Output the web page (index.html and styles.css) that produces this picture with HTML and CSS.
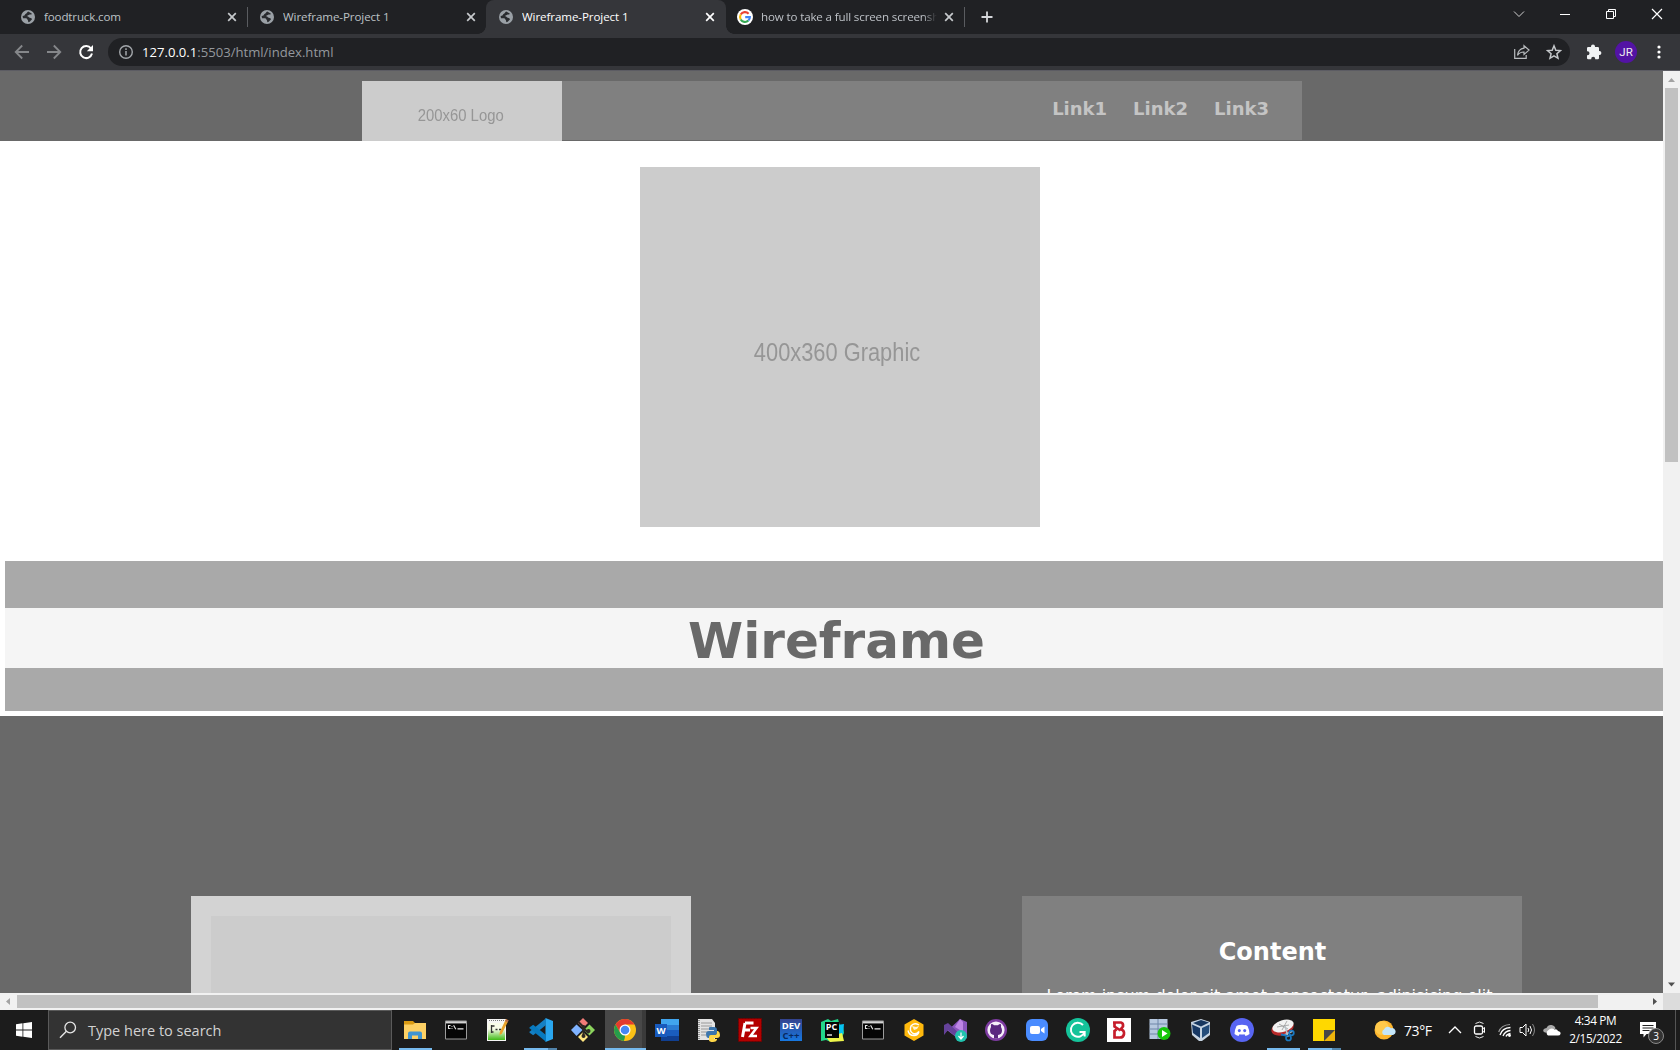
FILE: index.html
```html
<!DOCTYPE html>
<html lang="en">
<head>
<meta charset="utf-8">
<title>Wireframe-Project 1</title>
<link rel="stylesheet" href="styles.css">
</head>
<body>
<svg class="defs" width="0" height="0">
  <symbol id="globe" viewBox="0 0 14 14"><circle cx="7" cy="7" r="7" fill="#9aa0a6"/><path d="M7.2 1.6c-1.300.6-1 1.700-2.300 2.100C3.600 4.200 4 5.600 2.700 5.700L1.600 6.100 2 8.200l3.100.1c1 .1.800 1 1.500 1.500.7.400.2 1.500.9 2.500 2-.3 2.100-1.900 3.300-2.500.3-1.400-.700-1.900-2-2-1-.1-.8-1.200-2-1.300-.9-.2-.5-1.100.4-1.200 1.200 0 1-.8 2.100-.7 1 .1 1.500-.4 1.400-1.200z" fill="#292b2f"/></symbol>
  <symbol id="close" viewBox="0 0 10 10"><path d="M1.200 1.200l7.600 7.600M8.800 1.200L1.200 8.800" stroke="currentColor" stroke-width="1.700" fill="none"/></symbol>
  <symbol id="cmd" viewBox="0 0 24 24"><rect x="1" y="2.500" width="22" height="19" rx="1" fill="#9b9b9b"/><rect x="2" y="3.500" width="20" height="2" fill="#d4d4d4"/><rect x="2" y="5.500" width="20" height="15" fill="#050505"/><path d="M6.500 7.500h-2v3h2M8 8.200v.8M8 10v.8M9.600 7.300l2.200 4M13.500 10.900h6" stroke="#e8e8e8" stroke-width="1.100" fill="none"/></symbol>
</svg>

<header class="chrome">
  <div class="tabs">
    <div class="tab first"><svg class="fav"><use href="#globe"/></svg><span class="title t-food">foodtruck.com</span><svg class="x"><use href="#close"/></svg></div>
    <div class="tab sep"><svg class="fav"><use href="#globe"/></svg><span class="title t-wire">Wireframe-Project 1</span><svg class="x"><use href="#close"/></svg></div>
    <div class="tab active"><svg class="fav"><use href="#globe"/></svg><span class="title t-wire">Wireframe-Project 1</span><svg class="x"><use href="#close"/></svg></div>
    <div class="tab sep-right"><svg class="fav google" viewBox="0 0 16 16"><circle cx="8" cy="8" r="8" fill="#fff"/><g fill="none" stroke-width="2.100"><path d="M11.600 4.700A4.900 4.900 0 0 0 3.700 5.600" stroke="#ea4335"/><path d="M3.700 5.600a4.900 4.900 0 0 0 0 4.800" stroke="#fbbc05"/><path d="M3.700 10.400a4.900 4.900 0 0 0 7.700 1.200" stroke="#34a853"/><path d="M11.400 11.600A4.900 4.900 0 0 0 12.900 8.100H8.200" stroke="#4285f4"/></g></svg><span class="title t-google">how to take a full screen screenshot</span><svg class="x"><use href="#close"/></svg></div>
    <svg class="plus" viewBox="0 0 12 12"><path d="M6 .5v11M.5 6h11" stroke="#d5d7da" stroke-width="1.800"/></svg>
    <div class="winctl">
      <svg width="12" height="12" viewBox="0 0 12 12"><path d="M1 3.500l5 5 5-5" stroke="#d0d0d0" fill="none"/></svg>
      <svg width="12" height="12" viewBox="0 0 12 12"><path d="M1 6.500h10" stroke="#fff"/></svg>
      <svg width="12" height="12" viewBox="0 0 12 12"><path d="M1.500 3.500h7v7h-7zM3.500 3.500v-2h7v7h-2" stroke="#fff" fill="none"/></svg>
      <svg width="12" height="12" viewBox="0 0 12 12"><path d="M1 1l10 10M11 1L1 11" stroke="#fff" stroke-width="1.200"/></svg>
    </div>
  </div>
  <div class="toolbar">
    <div class="nav">
      <svg width="16" height="16" viewBox="0 0 16 16"><path d="M15 8H2M8.200 1.500L1.700 8l6.500 6.500" stroke="#85878a" stroke-width="1.800" fill="none"/></svg>
      <svg width="16" height="16" viewBox="0 0 16 16"><path d="M1 8h13M7.800 1.500L14.300 8l-6.500 6.500" stroke="#85878a" stroke-width="1.800" fill="none"/></svg>
      <svg width="16" height="16" viewBox="0 0 16 16"><path d="M13 4.500A6 6 0 1 0 14 9.600" stroke="#fff" stroke-width="2" fill="none"/><path d="M15 1v6.200H8.800z" fill="#fff"/></svg>
    </div>
    <div class="omnibox">
      <svg width="16" height="16" viewBox="0 0 16 16"><circle cx="8" cy="8" r="6.300" fill="none" stroke="#a3a7ab" stroke-width="1.400"/><path d="M8 7v4.500M8 4.300v1.600" stroke="#a3a7ab" stroke-width="1.500"/></svg>
      <span class="url"><b>127.0.0.1</b>:5503/html/index.html</span>
      <svg class="share" width="16" height="16" viewBox="0 0 16 16"><path d="M.700 5v9.300h11.500V11" stroke="#b9bcbf" fill="none" stroke-width="1.200"/><path d="M10 1.700l5 4.400-5 4.400V8C7 7.900 5 9 3.500 11.300 3.900 7.500 6 4.800 10 4.200z" stroke="#b9bcbf" fill="none" stroke-width="1.200"/></svg>
      <svg width="16" height="16" viewBox="0 0 16 16"><path d="M8 1.800l1.800 4.400 4.700.4-3.600 3.100 1.100 4.600L8 11.900l-4 2.400 1.100-4.600-3.600-3.100 4.700-.4z" stroke="#c4c7ca" fill="none" stroke-width="1.500"/></svg>
    </div>
    <svg class="ext" width="16" height="16" viewBox="0 0 16 16"><path d="M1 4.200Q1 3 2.200 3H5V2.600a2 2 0 0 1 4 0V3h2.800Q13 3 13 4.200V7h.4a2 2 0 0 1 0 4H13v3q0 1.200-1.200 1.200H9.200v-.5a2 2 0 0 0-4 0v.5h-3Q1 15.200 1 14v-2.700h.5a2 2 0 0 0 0-4H1z" fill="#f1f3f4"/></svg>
    <span class="avatar">JR</span>
    <svg width="4" height="14" viewBox="0 0 4 14"><g fill="#fff"><circle cx="2" cy="2" r="1.600"/><circle cx="2" cy="7" r="1.600"/><circle cx="2" cy="12" r="1.600"/></g></svg>
  </div>
</header>

<div class="viewport">
  <main class="page">
    <div class="site-header">
      <div class="site-bar">
        <div class="logo"><span>200x60 Logo</span></div>
        <nav class="links"><a>Link1</a><a>Link2</a><a>Link3</a></nav>
      </div>
    </div>
    <div class="hero"><div class="graphic"><span>400x360 Graphic</span></div></div>
    <div class="banner"><h1><span>Wireframe</span></h1></div>
    <div class="columns">
      <div class="card photo"><div class="photo-inner"></div></div>
      <div class="card content"><h2>Content</h2><p>Lorem ipsum dolor sit amet consectetur, adipisicing elit.</p></div>
    </div>
  </main>
  <div class="vscroll">
    <svg width="17" height="17" viewBox="0 0 17 17"><path d="M5 11l3.500-4 3.500 4z" fill="#a3a3a3"/></svg>
    <div class="vthumb"></div>
    <svg class="end" width="17" height="17" viewBox="0 0 17 17"><path d="M5 6.500l3.500 4 3.500-4z" fill="#505050"/></svg>
  </div>
  <div class="hscroll">
    <svg width="17" height="17" viewBox="0 0 17 17"><path d="M10 5L6 8.500l4 3.500z" fill="#a3a3a3"/></svg>
    <div class="hthumb"></div>
    <svg class="end" width="17" height="17" viewBox="0 0 17 17"><path d="M7 5l4 3.500L7 12z" fill="#505050"/></svg>
  </div>
  <div class="corner"></div>
</div>

<footer class="taskbar">
  <div class="start"><svg width="16" height="16" viewBox="0 0 16 16"><path d="M0 2.200L6.500 1.300v6.200H0zM7.300 1.200L16 0v7.500H7.300zM0 8.400h6.500v6.300L0 13.800zM7.300 8.400H16V16l-8.700-1.200z" fill="#fff"/></svg></div>
  <div class="search"><svg width="18" height="18" viewBox="0 0 18 18"><circle cx="11.200" cy="6.500" r="5.300" fill="none" stroke="#e6e6e6" stroke-width="1.300"/><path d="M7.400 10.300L1 16.800" stroke="#e6e6e6" stroke-width="1.400"/></svg><span>Type here to search</span></div>
  <div class="apps">
    <div class="app run"><svg viewBox="0 0 24 24"><path d="M1 3h9l2 2h11v5H1z" fill="#d99a13"/><path d="M1 6.500h9L12 5h11v16H1z" fill="#fcd064"/><path d="M5 21v-5.500q0-2 2-2h10q2 0 2 2V21h-4v-3.500H9V21z" fill="#3f94d1"/></svg></div>
    <div class="app"><svg><use href="#cmd"/></svg></div>
    <div class="app"><svg viewBox="0 0 24 24"><defs><linearGradient id="npp" x2="0" y2="1"><stop offset=".35" stop-color="#f8fbe9"/><stop offset="1" stop-color="#3fbb16"/></linearGradient></defs><path d="M1 1h19v22H1z" fill="#f5f5f5"/><path d="M2 5h17v17H2z" fill="url(#npp)"/><path d="M3 2.500h15" stroke="#777" stroke-dasharray="1 1"/><path d="M5.500 7v8M5.500 8h3M5.500 14h2M9.500 11.500h2M13 11.500h2" stroke="#333" stroke-width="1.300"/><path d="M20 1l2.500 1.500-6.500 13-2.500 1.800.3-3.300z" fill="#e9a32b"/><path d="M20 1l2.500 1.500-1 2L19 3z" fill="#b76d4a"/></svg></div>
    <div class="app run multi"><svg viewBox="0 0 24 24"><path d="M16.500 0L24 3v18l-7.500 3z" fill="#2aa7ef"/><path d="M17 .200V7L4.200 17.300 1 15 .200 14z" fill="#1580c4"/><path d="M17 23.800V17L4.200 6.700 1 9l-.8 1z" fill="#087abf"/></svg></div>
    <div class="app"><svg viewBox="0 0 24 24"><path d="M12 0l5 5-5 5-5-5z" fill="#f27c78"/><path d="M5.500 6.500L11.500 12l-6 6-5.500-6z" fill="#80b3ff"/><path d="M18.500 6.500L24 12l-5.500 5.500L13 12z" fill="#8bd45d"/><path d="M12 14l5 5-5 5-5-5z" fill="#ffe680"/><path d="M7 3.500l5.500 5.500v10M12 10l6 5" stroke="#2d2822" stroke-width="2" fill="none"/><circle cx="12.500" cy="9" r="1.900" fill="#2d2822"/><circle cx="12.500" cy="18" r="2" fill="#2d2822"/><circle cx="17.500" cy="13" r="2" fill="#2d2822"/></svg></div>
    <div class="app run current"><svg viewBox="0 0 24 24"><circle cx="12" cy="12" r="11" fill="#fbc116"/><path d="M2.500 6.500A11 11 0 0 1 21.500 6.500H12L7.200 14.800z" fill="#e33b2e"/><path d="M2.500 6.500L7.200 14.800 12 17.500 11.500 23A11 11 0 0 1 2.500 6.500z" fill="#269c4b"/><path d="M16.800 14.700L12 23H11l2-6z" fill="#fbc116"/><circle cx="12" cy="12" r="5.500" fill="#fff"/><circle cx="12" cy="12" r="4.300" fill="#4587f3"/></svg></div>
    <div class="app"><svg viewBox="0 0 24 24"><path d="M6 1h18v22H6z" fill="#1a5dbe"/><path d="M6 1h18v6H6z" fill="#41a5ee"/><path d="M6 7h18v5H6z" fill="#2b7cd3"/><path d="M6 18h18v5H6z" fill="#103f91"/><path d="M0 6h12v13H0z" fill="#185abd"/><text x="6" y="16" class="g g10" fill="#fff">W</text></svg></div>
    <div class="app"><svg viewBox="0 0 24 24"><path d="M1 1h14l3 4v17H1z" fill="#e3e3e3"/><path d="M4 5h11M4 8h11M4 11h11M4 14h8M4 17h6" stroke="#999"/><path d="M2 2v20" stroke="#444" stroke-dasharray="1 1"/><path d="M13 9h4q3 0 3 3v3q0 2-2 2h-3q-2 0-2 3H11q-2-1-2-4 0-3 3-3h5v-1h-5v-2q0-1 1-1z" fill="#3b75ad"/><path d="M20 13h1q2 1 2 4 0 3-3 3h-3v1h3v1q-1 2-4 2-4 0-4-2v-3q0-2 2-2h4q2 0 2-3z" fill="#ffd748"/></svg></div>
    <div class="app"><svg viewBox="0 0 24 24"><path d="M.500.500h23v23H.500z" fill="#b40000" stroke="#6f0000" stroke-dasharray="2 1"/><path d="M7 5h8.500M7 5L4.500 19M6 12h6" stroke="#fff" stroke-width="3"/><path d="M12.500 10h6l-6 8h6.500" stroke="#fff" stroke-width="2.500" fill="none"/></svg></div>
    <div class="app"><svg viewBox="0 0 24 24"><defs><linearGradient id="dev" x2="0" y2="1"><stop stop-color="#34438e"/><stop offset="1" stop-color="#1778e1"/></linearGradient></defs><path d="M1 1h22v22H1z" fill="url(#dev)"/><text x="12" y="11" class="g g10" fill="#fff">DEV</text><text x="12" y="21" class="g g10" fill="#08295f">C++</text></svg></div>
    <div class="app"><svg viewBox="0 0 24 24"><path d="M1 4l7-3 3 2 7-2 2 7 3 0 1 7-2 4 1 3-9-1-3 3-5-2-5 1z" fill="#21d789"/><path d="M17 7l7-1-1 10-6 1z" fill="#07c3f2"/><path d="M6 19l16-4 2 8-14 1z" fill="#eef54a"/><path d="M5 4h14v16H5z" fill="#050505"/><text x="11.500" y="12" class="g g9" fill="#fff">PC</text><path d="M7 17h5" stroke="#fff" stroke-width="1.300"/></svg></div>
    <div class="app"><svg><use href="#cmd"/></svg></div>
    <div class="app"><svg viewBox="0 0 24 24"><path d="M12 1l9.500 5.500v11L12 23l-9.500-5.500v-11z" fill="#ffb90d"/><path d="M17 7q-5-3-8 1-2 5 2 7.500 4 1 6-2-1 4-5 4-5 0-6-5" stroke="#fff" stroke-width="1.400" fill="none"/><path d="M10 8l4 1 3-1-2 3-3 1z" fill="#fff4d7"/></svg></div>
    <div class="app"><svg viewBox="0 0 24 24"><path d="M17 1l7 3v16l-6 3L4.500 12.500 1.500 15V8l3-2 4 3z" fill="#8a56bd"/><path d="M17 1l3 3v10L12 9z" fill="#bd85e5"/><path d="M1 7l4-2 13 12v6L5 12l-4 5z" fill="#65429a"/><circle cx="18" cy="18" r="6" fill="#20c3ae"/><path d="M18 14.500v6M15.500 18l2.500 3 2.500-3" stroke="#fff" stroke-width="1.200" fill="none"/></svg></div>
    <div class="app"><svg viewBox="0 0 24 24"><circle cx="12" cy="12" r="11" fill="#7d3ba0"/><circle cx="12" cy="12" r="8.600" fill="#f6effa"/><path d="M10 20.500v-3.500q-4-.5-4-4.500Q6 10.500 7 9q-.4-2 .3-3 1.700.1 2.700 1.200h4q1-1.100 2.700-1.200.7 1 .3 3 1 1.500 1 3.500 0 4-4 4.500v3.500z" fill="#5b2880"/></svg></div>
    <div class="app"><svg viewBox="0 0 24 24"><rect x="1" y="1" width="22" height="22" rx="6" fill="#4a8cff"/><rect x="5" y="8" width="10" height="8" rx="2" fill="#fff"/><path d="M16 11l3.500-2.500v7L16 13z" fill="#fff"/></svg></div>
    <div class="app"><svg viewBox="0 0 24 24"><circle cx="12" cy="12" r="12" fill="#15c39a"/><path d="M17 7A7 7 0 1 0 18.500 14H13.500M18.700 13.500v5" stroke="#fff" stroke-width="1.900" fill="none"/></svg></div>
    <div class="app"><svg viewBox="0 0 24 24"><path d="M0 0h24v24H0z" fill="#fff"/><path d="M6 4.500h8q2.500.5 2 4l-2.500 3q4 .5 3.500 4.500-.5 3.500-4 3.500H7.500v-6.500l2-1.500M7.500 4v4.500l6 4" stroke="#c61d2b" stroke-width="2.700" fill="none"/></svg></div>
    <div class="app"><svg viewBox="0 0 24 24"><path d="M1.500 1h18v20h-18z" fill="#b6c8df"/><path d="M1.500 6h18M1.500 11h18M1.500 16h18M10 1v20" stroke="#6f86a8"/><circle cx="16" cy="15.500" r="6.500" fill="#16c60c"/><path d="M14 12l5.500 3.500L14 19z" fill="#fff"/></svg></div>
    <div class="app"><svg viewBox="0 0 24 24"><path d="M2 4l10-3 9 3v13l-8 6h-3l-7-6z" fill="#c6d4e2"/><path d="M4 5l8-3 8 2.500-8 4z" fill="#17375f"/><path d="M3 6.500l8 3.500v10l-7-5z" fill="#173864"/><path d="M20.500 6.500L13 10v10l7-5z" fill="#234c7a"/></svg></div>
    <div class="app"><svg viewBox="0 0 24 24"><circle cx="12" cy="12" r="12" fill="#5865f2"/><path d="M8 7.200q4-1 8 0l1.500.8q2 4 2 8-2 1.500-4 2l-1-1.700q-2.500.6-5 0L8.500 18q-2-.5-4-2 0-4 2-8z" fill="#fff"/><ellipse cx="9.300" cy="12.600" rx="1.500" ry="1.700" fill="#5865f2"/><ellipse cx="14.700" cy="12.600" rx="1.500" ry="1.700" fill="#5865f2"/></svg></div>
    <div class="app run"><svg viewBox="0 0 24 24"><ellipse cx="11.500" cy="10" rx="11.500" ry="7" transform="rotate(-18 12 10)" fill="#b82a2a"/><ellipse cx="12" cy="8" rx="11" ry="5.800" transform="rotate(-18 12 8)" fill="#f2f2f2"/><path d="M6 9l12-2M11 12l5-9M8 6l9 5" stroke="#999" stroke-width=".8"/><path d="M14 8l3 11M22 13l-9 4" stroke="#b8c1c8" stroke-width="1.500"/><circle cx="17.500" cy="20" r="2.500" fill="none" stroke="#1a79c2" stroke-width="1.700"/><circle cx="20.500" cy="15" r="2.300" fill="none" stroke="#1a79c2" stroke-width="1.700"/><path d="M10 16.500l5 1" stroke="#1a79c2" stroke-width="2"/></svg></div>
    <div class="app run multi"><svg viewBox="0 0 24 24"><path d="M1 1h22v22H1z" fill="#ffd800"/><path d="M12 12h11v11H12z" fill="#eeb40b"/><path d="M12 12h11L12 23z" fill="#474747"/></svg></div>
  </div>
  <div class="tray">
    <svg class="weather" width="22" height="20" viewBox="0 0 22 20"><circle cx="10" cy="10" r="9.500" fill="#fcb52e"/><circle cx="8" cy="8" r="7" fill="#ffc94b"/><path d="M10 15a3 3 0 0 1 0-5.500 4 4 0 0 1 7-1.300 3.500 3.500 0 0 1 2 6.800z" fill="#c4e6fa"/></svg>
    <span class="temp">73°F</span>
    <svg class="chev" width="14" height="10" viewBox="0 0 14 10"><path d="M1 8l6-6 6 6" stroke="#fff" stroke-width="1.300" fill="none"/></svg>
    <svg class="meet" width="14" height="18" viewBox="0 0 14 18"><path d="M2.500 2.500q4-3 8 0M2.500 15.500q4 3 8 0" stroke="#e8e8e8" fill="none"/><rect x="1.500" y="5" width="8" height="8" rx="1.500" stroke="#fff" stroke-width="1.300" fill="none"/><path d="M9.500 8l2-1.500v5l-2-1.500" stroke="#fff" fill="none"/></svg>
    <svg class="wifi" width="15" height="15" viewBox="0 0 15 15"><path d="M.700 9Q3 2 12 1.500" stroke="#999" fill="none" stroke-width="1.200"/><path d="M2 12Q4 5 12.500 4.500M5 13Q7 8 12.500 7.500M8 13.500Q9 11 12.500 10.500" stroke="#fff" fill="none" stroke-width="1.300"/><circle cx="11.500" cy="12.500" r="1.400" fill="#fff"/></svg>
    <svg class="vol" width="17" height="16" viewBox="0 0 17 16"><path d="M1 5.500h2.500L7 2v12l-3.500-3.500H1z" stroke="#fff" fill="none"/><path d="M9 6q1.500 2 0 4M11 4q3 4 0 8" stroke="#fff" fill="none"/><path d="M13.500 2q4 6 0 12" stroke="#888" fill="none"/></svg>
    <svg class="cloud" width="18" height="12" viewBox="0 0 18 12"><path d="M2 8.500Q-.500 8 .500 5.500 1.500 4 3.500 4 5 .500 8.500 1t4 3.500L6 9z" fill="#aaa"/><path d="M5 11.500a3 3 0 0 1 0-5Q8 3 11.500 5.500q2.500-1 3.500 1.500 3 .5 2.500 3-.5 1.500-2.500 1.500z" fill="#fff"/></svg>
    <div class="clock"><span class="time">4:34 PM</span><span class="date">2/15/2022</span></div>
    <div class="notif"><svg width="16" height="16" viewBox="0 0 16 16"><path d="M0 0h16v12H6.500L3.500 15.500V12H0z" fill="#fff"/><path d="M2.500 3.500h11M2.500 6h11M2.500 8.500h7" stroke="#222"/></svg><span class="badge">3</span></div>
    <i class="show-desktop"></i>
  </div>
</footer>
</body>
</html>
```
FILE: styles.css
```css
* { box-sizing: border-box; }
body { margin: 0; width: 1680px; height: 1050px; overflow: hidden; display: flex; flex-direction: column; background: #fff; font-family: "Open Sans", "Noto Sans", sans-serif; }
svg { display: block; flex: none; }
.defs { position: absolute; }

/* browser frame */
.chrome { flex: none; height: 71px; background: #35363a; border-bottom: 1px solid #5c5c63; }
.tabs { display: flex; align-items: center; height: 34px; background: #202124; color: #bdc1c6; }
.tab { position: relative; display: flex; align-items: center; width: 239px; height: 34px; padding: 0 10px 0 13px; }
.tab.first { width: 247px; padding-left: 21px; }
.fav { width: 14px; height: 14px; margin: 0 9px 0 0; }
.google { width: 16px; height: 16px; margin: 0 8px 0 -1px; }
.title { flex: 1; font-size: 11.600px; line-height: 18px; white-space: nowrap; overflow: hidden; }
.t-food { letter-spacing: -.15px; }
.t-wire { letter-spacing: -.1px; }
.t-google { margin-right: 7px; letter-spacing: -.15px; mask-image: linear-gradient(90deg, #000 92%, transparent); }
.x { width: 10px; height: 10px; color: #c6c9cc; }
.tab.sep::before, .sep-right::after { content: ""; position: absolute; top: 7px; left: 0; width: 1px; height: 20px; background: #5a5c60; }
.sep-right::after { left: 238px; }
.sep-right { padding: 0 11px 0 12px; }
.active { width: 240px; padding-right: 11px; background: #35363a; border-radius: 8px 8px 0 0; color: #fff; }
.active .x { color: #fff; }
.active::before, .active::after { content: ""; position: absolute; bottom: 0; width: 8px; height: 8px; }
.active::before { left: -8px; background: radial-gradient(circle at 0 0, transparent 7.500px, #35363a 8px); }
.active::after { right: -8px; background: radial-gradient(circle at 100% 0, transparent 7.500px, #35363a 8px); }
.plus { width: 12px; height: 12px; margin-left: 16px; }
.winctl { display: flex; gap: 34px; margin: -6px 17px 0 auto; }
.toolbar { display: flex; align-items: center; height: 36px; padding-right: 19px; }
.nav { display: flex; gap: 16px; padding: 0 14px; }
.omnibox { display: flex; align-items: center; width: 1464px; height: 28px; padding: 0 8px 0 10px; border-radius: 14px; background: #202124; }
.url { flex: 1; margin-left: 8px; font-size: 13.100px; line-height: 20px; color: #94989d; }
.url b { font-weight: 400; color: #fff; }
.share { margin-right: 16px; }
.ext { margin-left: 16px; }
.avatar { width: 22px; height: 22px; margin: 0 20px 0 13px; border-radius: 50%; background: #5313a4; color: #eee; font: 11.500px/23px Roboto, sans-serif; text-align: center; }
.toolbar > svg:last-child { margin-left: auto; margin-right: 0; }

/* page area with scrollbars */
.viewport { display: grid; grid-template: 922px 17px / 1663px 17px; flex: none; }
.page { display: flex; flex-direction: column; overflow: hidden; background: #fff; font-family: Verdana, "DejaVu Sans", sans-serif; }
.site-header { flex: none; display: flex; align-items: flex-start; height: 70px; padding: 10px 361px 0 362px; background: #696969; }
.site-bar { display: flex; justify-content: space-between; width: 940px; height: 59px; background: #808080; }
.logo, .graphic { display: flex; align-items: center; justify-content: center; background: #ccc; color: #969696; font-family: "Liberation Sans", sans-serif; white-space: nowrap; }
.logo { width: 200px; height: 60px; font-size: 16.500px; padding: 8px 2px 0 0; }
.logo span { transform: scaleX(.9); }
.links { display: flex; gap: 26px; padding: 17px 33px 0 0; color: #c4c4c4; font-size: 18px; font-weight: 700; line-height: 22px; }
.hero { flex: none; display: flex; justify-content: center; height: 420px; padding: 26px 0 0 17px; }
.graphic { width: 400px; height: 360px; font-size: 26px; padding: 11px 6px 0 0; }
.graphic span { transform: scaleX(.84); }
.banner { flex: none; height: 150px; margin: 0 0 5px 5px; padding: 47px 0 43px; background: #a9a9a9; }
h1 { margin: 0; height: 60px; padding-left: 5px; background: #f5f5f5; color: #696969; font-size: 50px; line-height: 67px; text-align: center; }
.columns { flex: 1; display: flex; gap: 331px; padding: 180px 0 0 191px; background: #696969; }
.card { width: 500px; height: 500px; }
.photo { padding: 20px; background: #d3d3d3; }
.photo-inner { height: 460px; background: #ccc; }
.content { background: #808080; color: #fff; text-align: center; }
h2 { margin: 41px 0 0 1px; font-size: 24px; line-height: 30px; }
p { margin: 19px 0 0; font-size: 16px; line-height: 20px; white-space: nowrap; }
.vscroll { display: flex; flex-direction: column; background: #f1f1f1; }
.vthumb { width: 13px; height: 374px; margin-left: 2px; background: #c1c1c1; }
.vscroll .end { margin-top: auto; }
.hscroll { display: flex; align-items: center; background: #f1f1f1; }
.hthumb { width: 1581px; height: 13px; background: #c1c1c1; }
.hscroll .end { margin-left: auto; }
.corner { background: #dcdcdc; }

/* Windows taskbar */
.taskbar { flex: none; display: flex; height: 40px; background: #1c1c1c; color: #fff; }
.start { width: 48px; display: grid; place-items: center; }
.search { display: flex; align-items: center; width: 344px; border: 1px solid #5a5a5a; background: #333; padding-left: 10px; color: #d2d2d2; font-size: 14.500px; }
.search span { margin-left: 11px; }
.apps { display: grid; grid-template-columns: 41px 42px 42px 43px 42px 42px 42px repeat(16, 41px); padding-left: 2px; }
.app { position: relative; display: grid; place-items: center; }
.app svg { width: 24px; height: 24px; }
.run::after { content: ""; position: absolute; bottom: 0; left: 5px; width: 33px; height: 2px; background: #76b9ed; }
.multi::after { background: linear-gradient(90deg, #76b9ed 24px, #5284ab 24px); }
.current { background: linear-gradient(90deg, transparent 1px, #484848 1px, #484848 38px, #3a3a3a 38px); }
.current::after { left: 1px; width: 41px; }
.g { font-family: "Open Sans", sans-serif; font-weight: 700; text-anchor: middle; }
.g10 { font-size: 9.500px; }
.g9 { font-size: 9px; }
.tray { display: flex; align-items: center; flex: 1; padding-left: 30px; }
.temp { margin-left: 8px; width: 27px; font-size: 14px; letter-spacing: -.4px; white-space: nowrap; }
.chev { margin-left: 17px; }
.meet { margin-left: 11px; }
.wifi { margin-left: 11px; }
.vol { margin-left: 6px; }
.cloud { margin-left: 7px; }
.clock { display: flex; flex-direction: column; align-items: center; width: 53px; margin: -2px 0 0 8px; font-size: 11.800px; line-height: 18px; white-space: nowrap; letter-spacing: -.35px; }
.notif { position: relative; margin-left: 18px; }
.badge { position: absolute; left: 8px; top: 6px; width: 16px; height: 16px; border: 1px solid #8a8a8a; border-radius: 50%; background: #333; font-size: 10px; line-height: 14px; text-align: center; }
.show-desktop { margin: 0 4px 0 auto; width: 1px; height: 40px; background: #555; }
```
